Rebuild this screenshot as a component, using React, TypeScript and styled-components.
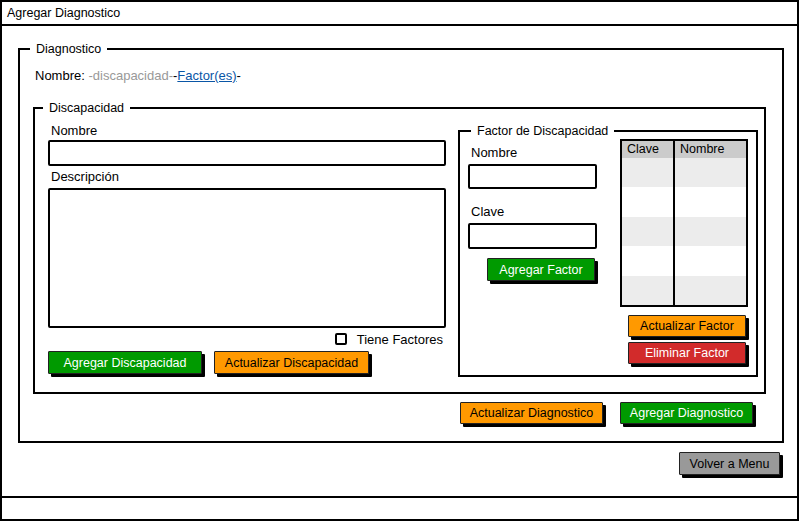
import React from "react";
import styled, { createGlobalStyle } from "styled-components";

const Global = createGlobalStyle`
  html, body { margin: 0; padding: 0; background: #fff; }
  body { font-family: "Liberation Sans", Arial, sans-serif; font-size: 13px; color: #000; }
  * { box-sizing: border-box; }
`;

const Window = styled.div`
  width: 799px;
  height: 521px;
  border: 2px solid #000;
  display: flex;
  flex-direction: column;
  background: #fff;
`;

const TitleBar = styled.div`
  height: 24px;
  border-bottom: 2px solid #000;
  padding: 0 0 0 5px;
  display: flex;
  align-items: center;
  font-size: 12.5px;
`;

const Content = styled.div`
  flex: 1;
  padding: 15px 13px 0 16px;
  display: flex;
  flex-direction: column;
`;

const StatusBar = styled.div`
  height: 23px;
  border-top: 2px solid #000;
`;

const Group = styled.fieldset<{ $pad: string; $w?: number }>`
  margin: 0;
  border: 2px solid #000;
  padding: ${(p) => p.$pad};
  min-width: 0;
  ${(p) => (p.$w ? `width: ${p.$w}px;` : "")}
`;

const Legend = styled.legend<{ $offset: number }>`
  font-size: 12.5px;
  line-height: 16px;
  padding: 0 6px;
  margin-left: ${(p) => p.$offset}px;
`;

const NameRow = styled.div`
  line-height: 16px;
  margin: 0 0 16px 2px;
  font-size: 13px;
`;

const Muted = styled.span`
  color: #999;
`;

const Link = styled.a`
  color: #0a56a6;
  text-decoration: underline;
`;

const DisRow = styled.div`
  display: flex;
  justify-content: space-between;
  align-items: flex-start;
`;

const Column = styled.div<{ $w: number }>`
  width: ${(p) => p.$w}px;
  display: flex;
  flex-direction: column;
`;

const Label = styled.div<{ $mt?: number }>`
  line-height: 16px;
  font-size: 13px;
  margin-top: ${(p) => p.$mt ?? 0}px;
  padding-left: 3px;
`;

const Field = styled.div<{ $h: number; $mt?: number }>`
  height: ${(p) => p.$h}px;
  border: 2px solid #000;
  border-radius: 2px;
  margin-top: ${(p) => p.$mt ?? 0}px;
  background: #fff;
`;

const CheckRow = styled.label`
  display: flex;
  justify-content: flex-end;
  align-items: center;
  gap: 10px;
  line-height: 16px;
  margin-top: 4px;
  padding-right: 3px;
  font-size: 13px;
`;

const Check = styled.span`
  width: 12px;
  height: 12px;
  border: 2px solid #000;
  border-radius: 2px;
  margin-top: -3px;
`;

const ButtonRow = styled.div<{ $justify?: string; $gap: number; $mt: number; $pr?: number }>`
  display: flex;
  justify-content: ${(p) => p.$justify ?? "flex-start"};
  gap: ${(p) => p.$gap}px;
  margin-top: ${(p) => p.$mt}px;
  padding-right: ${(p) => p.$pr ?? 0}px;
`;

const tones: Record<string, { bg: string; fg: string }> = {
  green: { bg: "#009a00", fg: "#fff" },
  orange: { bg: "#ff9900", fg: "#000" },
  red: { bg: "#d22b2b", fg: "#fff" },
  grey: { bg: "#999999", fg: "#000" },
};

const Button = styled.button<{ $tone: string; $w: number; $h?: number }>`
  width: ${(p) => p.$w}px;
  height: ${(p) => p.$h ?? 23}px;
  padding: 0;
  font-family: "Liberation Sans", Arial, sans-serif;
  font-size: 12.5px;
  background: ${(p) => tones[p.$tone].bg};
  color: ${(p) => tones[p.$tone].fg};
  border: 1px solid #222;
  border-radius: 1px;
  box-shadow: 3px 3px 0 #000;
  cursor: pointer;
  display: flex;
  align-items: center;
  justify-content: center;
`;

const FactorRow = styled.div`
  display: flex;
  justify-content: space-between;
  align-items: flex-start;
`;

const Table = styled.div`
  width: 128px;
  height: 168px;
  border: 2px solid #000;
  display: grid;
  grid-template-columns: 51px 2px 1fr;
  grid-template-rows: 17px repeat(5, 1fr);
  background: #fff;
`;

const HeadCell = styled.div<{ $col: number }>`
  grid-column: ${(p) => p.$col};
  grid-row: 1;
  background: #cbcbcb;
  line-height: 17px;
  padding-left: 5px;
  font-size: 12.5px;
`;

const Cell = styled.div<{ $alt: boolean }>`
  background: ${(p) => (p.$alt ? "#ececec" : "#fff")};
`;

const Divider = styled.div`
  background: #000;
  grid-column: 2;
  grid-row: 1 / span 6;
`;

const RightCol = styled.div`
  display: flex;
  flex-direction: column;
  align-items: flex-end;
`;

const Footer = styled.div`
  display: flex;
  justify-content: flex-end;
  margin-top: 9px;
  padding-right: 4px;
`;

export default function App() {
  const rows = [0, 1, 2, 3, 4];
  return (
    <>
      <Global />
      <Window>
        <TitleBar>Agregar Diagnostico</TitleBar>
        <Content>
          <Group $pad="11px 16px 17px 13px">
            <Legend $offset={-3}>Diagnostico</Legend>
            <NameRow>
              Nombre: <Muted>-discapacidad-</Muted>-<Link>Factor(es)</Link>-
            </NameRow>
            <Group $pad="7px 6px 15px 13px">
              <Legend $offset={-5}>Discapacidad</Legend>
              <DisRow>
                <Column $w={398}>
                  <Label>Nombre</Label>
                  <Field $h={26} $mt={1} />
                  <Label $mt={3}>Descripción</Label>
                  <Field $h={140} $mt={3} />
                  <CheckRow>
                    <Check />
                    Tiene Factores
                  </CheckRow>
                  <ButtonRow $gap={12} $mt={3}>
                    <Button $tone="green" $w={154}>Agregar Discapacidad</Button>
                    <Button $tone="orange" $w={155}>Actualizar Discapacidad</Button>
                  </ButtonRow>
                </Column>
                <Group $pad="0 8px 11px 8px" $w={300}>
                  <Legend $offset={3}>Factor de Discapacidad</Legend>
                  <FactorRow>
                    <Column $w={129}>
                      <Label $mt={6}>Nombre</Label>
                      <Field $h={25} $mt={3} />
                      <Label $mt={15}>Clave</Label>
                      <Field $h={26} $mt={3} />
                      <ButtonRow $justify="flex-end" $gap={0} $mt={9} $pr={2}>
                        <Button $tone="green" $w={108}>Agregar Factor</Button>
                      </ButtonRow>
                    </Column>
                    <RightCol>
                      <Table>
                        <HeadCell $col={1}>Clave</HeadCell>
                        <Divider />
                        <HeadCell $col={3}>Nombre</HeadCell>
                        {rows.map((r) => (
                          <React.Fragment key={r}>
                            <Cell $alt={r % 2 === 0} style={{ gridColumn: 1, gridRow: r + 2 }} />
                            <Cell $alt={r % 2 === 0} style={{ gridColumn: 3, gridRow: r + 2 }} />
                          </React.Fragment>
                        ))}
                      </Table>
                      <ButtonRow $gap={0} $mt={8} $pr={2}>
                        <Button $tone="orange" $w={118} $h={22}>Actualizar Factor</Button>
                      </ButtonRow>
                      <ButtonRow $gap={0} $mt={5} $pr={2}>
                        <Button $tone="red" $w={118} $h={22}>Eliminar Factor</Button>
                      </ButtonRow>
                    </RightCol>
                  </FactorRow>
                </Group>
              </DisRow>
            </Group>
            <ButtonRow $justify="flex-end" $gap={17} $mt={8} $pr={13}>
              <Button $tone="orange" $w={143} $h={22}>Actualizar Diagnostico</Button>
              <Button $tone="green" $w={133} $h={22}>Agregar Diagnostico</Button>
            </ButtonRow>
          </Group>
          <Footer>
            <Button $tone="grey" $w={101}>Volver a Menu</Button>
          </Footer>
        </Content>
        <StatusBar />
      </Window>
    </>
  );
}
